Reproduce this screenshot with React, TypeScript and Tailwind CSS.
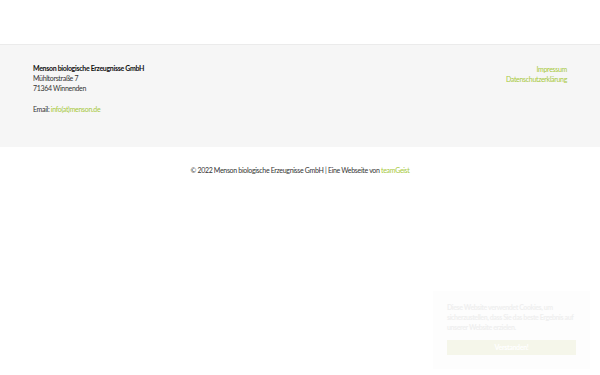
import React from "react";

export default function App() {
  return (
    <div className="relative min-h-[375px] w-full bg-white font-['Lato',sans-serif] text-[7px] tracking-[-0.32px] text-[#333]">
      {/* Kopfbereich */}
      <div className="h-[45px] border-b border-[#ebebeb]" />

      {/* Footer */}
      <footer className="flex h-[102px] justify-between bg-[#f6f6f6] px-[33px] pt-[18px]">
        <div className="leading-[10px]">
          <p className="font-bold text-[#111]">Menson biologische Erzeugnisse GmbH</p>
          <p>Mühltorstraße 7</p>
          <p>71364 Winnenden</p>
          <p className="mt-[11px]">
            Email: <a className="text-[#a6c83a]">info(at)menson.de</a>
          </p>
        </div>
        <div className="flex flex-col items-end pt-[1px] leading-[10px] text-[#a6c83a]">
          <a>Impressum</a>
          <a>Datenschutzerklärung</a>
        </div>
      </footer>

      {/* Copyright */}
      <p className="pt-[18px] text-center leading-[10px]">
        © 2022 Menson biologische Erzeugnisse GmbH | Eine Webseite von{" "}
        <a className="text-[#a6c83a]">teamGeist</a>
      </p>

      {/* Cookie-Hinweis */}
      <div className="absolute left-[433px] top-[291px] w-[157px] bg-[#fdfdfd] px-[14px] pt-[11px] pb-[14px]">
        <p className="text-[7px] font-bold leading-[10px] tracking-[-0.4px] text-[#efefef]">
          Diese Website verwendet Cookies, um sicherzustellen, dass Sie das beste Ergebnis auf unserer Website erzielen.
        </p>
        <button className="mt-[8px] h-[15px] w-full bg-[#f5f6ea] text-[7px] font-bold text-white">Verstanden!</button>
      </div>
    </div>
  );
}
